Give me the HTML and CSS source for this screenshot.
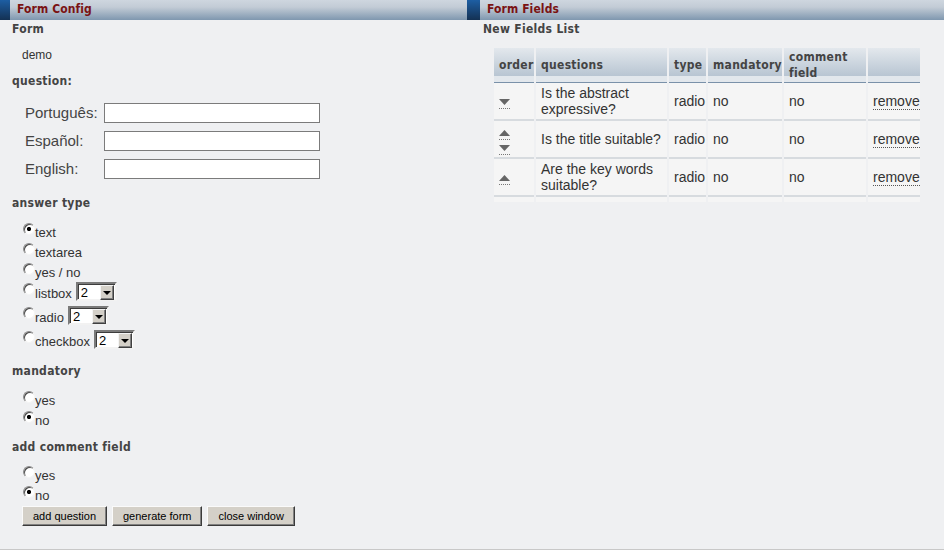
FILE: index.html
```html
<!DOCTYPE html>
<html>
<head>
<meta charset="utf-8">
<title>Form Config</title>
<link rel="stylesheet" href="styles.css">
</head>
<body>
<div class="page">
  <section class="panel panel-left">
    <div class="panel-head"><span class="head-mark"></span><h1 class="head-title">Form Config</h1></div>
    <div class="left-body">
      <div class="label-bold">Form</div>
      <div class="form-name">demo</div>
      <div class="label-bold q-label">question:</div>
      <div class="lang-grid">
        <label class="lang-label">Português:</label><input class="lang-input" type="text">
        <label class="lang-label">Español:</label><input class="lang-input" type="text">
        <label class="lang-label">English:</label><input class="lang-input" type="text">
      </div>

      <div class="label-bold sec-answer">answer type</div>
      <div class="radio-group group-answer">
        <div class="radio-row"><input class="radio" type="radio" name="at" checked><span class="radio-label">text</span></div>
        <div class="radio-row"><input class="radio" type="radio" name="at"><span class="radio-label">textarea</span></div>
        <div class="radio-row"><input class="radio" type="radio" name="at"><span class="radio-label">yes / no</span></div>
        <div class="radio-row tall"><input class="radio" type="radio" name="at"><span class="radio-label">listbox</span>
          <span class="select"><select class="select-native"><option>2</option></select><span class="select-btn"><span class="select-arrow"></span></span></span></div>
        <div class="radio-row tall"><input class="radio" type="radio" name="at"><span class="radio-label">radio</span>
          <span class="select"><select class="select-native"><option>2</option></select><span class="select-btn"><span class="select-arrow"></span></span></span></div>
        <div class="radio-row tall"><input class="radio" type="radio" name="at"><span class="radio-label">checkbox</span>
          <span class="select"><select class="select-native"><option>2</option></select><span class="select-btn"><span class="select-arrow"></span></span></span></div>
      </div>

      <div class="label-bold sec-mid">mandatory</div>
      <div class="radio-group group-mid">
        <div class="radio-row"><input class="radio" type="radio" name="md"><span class="radio-label">yes</span></div>
        <div class="radio-row"><input class="radio" type="radio" name="md" checked><span class="radio-label">no</span></div>
      </div>

      <div class="label-bold sec-mid">add comment field</div>
      <div class="radio-group group-comment">
        <div class="radio-row"><input class="radio" type="radio" name="cf"><span class="radio-label">yes</span></div>
        <div class="radio-row"><input class="radio" type="radio" name="cf" checked><span class="radio-label">no</span></div>
      </div>

      <div class="buttons">
        <button class="btn" type="button">add question</button>
        <button class="btn" type="button">generate form</button>
        <button class="btn" type="button">close window</button>
      </div>
    </div>
  </section>

  <section class="panel panel-right">
    <div class="panel-head"><span class="head-mark mark-wide"></span><h1 class="head-title">Form Fields</h1></div>
    <div class="right-body">
      <div class="label-bold">New Fields List</div>
      <div class="table-wrap">
        <table class="fields">
          <colgroup>
            <col class="c-order"><col class="c-q"><col class="c-type"><col class="c-mand"><col class="c-comm"><col class="c-act">
          </colgroup>
          <thead>
            <tr>
              <th>order</th>
              <th>questions</th>
              <th>type</th>
              <th>mandatory</th>
              <th class="wrap">comment field</th>
              <th></th>
            </tr>
          </thead>
          <tbody>
            <tr>
              <td class="order-cell"><span class="arrows"><a class="arrow" href="#"><svg width="11" height="6" viewBox="0 0 11 6"><path d="M0 0H11L5.5 6Z" fill="#666"/></svg></a></span></td>
              <td>Is the abstract expressive?</td>
              <td>radio</td>
              <td>no</td>
              <td>no</td>
              <td><a class="remove" href="#">remove</a></td>
            </tr>
            <tr>
              <td class="order-cell"><span class="arrows"><a class="arrow" href="#"><svg width="11" height="6" viewBox="0 0 11 6"><path d="M0 6H11L5.5 0Z" fill="#666"/></svg></a><a class="arrow" href="#"><svg width="11" height="6" viewBox="0 0 11 6"><path d="M0 0H11L5.5 6Z" fill="#666"/></svg></a></span></td>
              <td>Is the title suitable?</td>
              <td>radio</td>
              <td>no</td>
              <td>no</td>
              <td><a class="remove" href="#">remove</a></td>
            </tr>
            <tr>
              <td class="order-cell"><span class="arrows"><a class="arrow" href="#"><svg width="11" height="6" viewBox="0 0 11 6"><path d="M0 6H11L5.5 0Z" fill="#666"/></svg></a></span></td>
              <td>Are the key words suitable?</td>
              <td>radio</td>
              <td>no</td>
              <td>no</td>
              <td><a class="remove" href="#">remove</a></td>
            </tr>
            <tr class="stub"><td></td><td></td><td></td><td></td><td></td><td></td></tr>
          </tbody>
        </table>
      </div>
    </div>
  </section>
</div>
</body>
</html>
```

FILE: styles.css
```css
* { box-sizing: border-box; }
html, body { margin: 0; padding: 0; }
body {
  background: #eff0f2;
  font-family: "Liberation Sans", Arial, sans-serif;
  color: #333;
}
.page {
  display: flex;
  width: 944px;
  height: 550px;
  border-bottom: 1px solid #c8c8c8;
  overflow: hidden;
}
.panel-left { width: 467px; flex: none; }
.panel-right { width: 477px; flex: none; }

.panel-head {
  height: 20px;
  display: flex;
  background: linear-gradient(#ced6df 0%, #c3ccd6 35%, #7f97af 100%);
}
.head-mark {
  width: 10px;
  background: linear-gradient(#1d5ea3, #143153);
}
.mark-wide { width: 13px; }
.head-title {
  margin: 0 0 0 7px;
  font-family: "DejaVu Sans Condensed", "DejaVu Sans", sans-serif;
  font-stretch: condensed;
  font-weight: bold;
  font-size: 12px;
  line-height: 18px;
  letter-spacing: 0.1px;
  color: #7a1313;
}

.label-bold {
  font-family: "DejaVu Sans Condensed", "DejaVu Sans", sans-serif;
  font-stretch: condensed;
  font-weight: bold;
  font-size: 12px;
  line-height: 16px;
  height: 16px;
  padding-top: 1px;
  letter-spacing: 0.3px;
  color: #444;
}

.left-body { padding-left: 12px; }
.form-name {
  margin-top: 10px;
  padding-left: 10px;
  padding-top: 1px;
  height: 16px;
  font-size: 12px;
  line-height: 16px;
  color: #333;
}
.q-label { margin-top: 10px; }

.lang-grid {
  display: grid;
  grid-template-columns: 79px 216px;
  grid-auto-rows: 20px;
  row-gap: 8px;
  margin-top: 15px;
  padding-left: 13px;
}
.lang-label {
  font-size: 15px;
  line-height: 20px;
  color: #444;
}
.lang-input {
  height: 20px;
  margin: 0;
  border: 1px solid #7b7b7b;
  background: #fff;
  padding: 0 2px;
  font: 13px "Liberation Sans", Arial, sans-serif;
}

.sec-answer { margin-top: 15px; }
.sec-mid { margin-top: 7px; }
.group-answer, .group-mid { margin-top: 13px; }
.group-comment { margin-top: 12px; }

.radio-group { padding-left: 11px; }
.radio-row {
  height: 20px;
  display: flex;
  align-items: flex-start;
}
.radio-row.tall { height: 24px; }
.radio {
  appearance: none;
  -webkit-appearance: none;
  margin: 0;
  width: 12px;
  height: 12px;
  flex: none;
  border-radius: 50%;
  border: 1px solid;
  border-color: #8a8a8a #f4f4f4 #f4f4f4 #8a8a8a;
  background: #fff;
  box-shadow: inset 1px 1px 0 #4a4a4a;
}
.radio:checked {
  background: radial-gradient(circle at 50% 50%, #000 0, #000 1.8px, #fff 2.4px);
}
.radio-label {
  font-size: 13px;
  line-height: 16px;
  padding-top: 2px;
  color: #333;
}
.radio-row.tall .radio-label { padding-top: 3px; }

.select {
  display: flex;
  margin: -1px 0 0 4px;
  width: 41px;
  height: 19px;
  border: 2px solid;
  border-color: #7a7a7a #f2f2f2 #f2f2f2 #7a7a7a;
  box-shadow: inset 1px 1px 0 #3c3c3c;
  background: #fff;
  padding: 1px 1px 0 1px;
}
.select-native {
  appearance: none;
  -webkit-appearance: none;
  border: 0;
  margin: 0;
  background: transparent;
  width: 22px;
  height: 15px;
  padding: 0 0 0 2px;
  font: 13px/15px "Liberation Sans", Arial, sans-serif;
  color: #000;
  outline: none;
}
.select-btn {
  width: 14px;
  height: 15px;
  flex: none;
  display: flex;
  align-items: center;
  justify-content: center;
  background: #d4d0c8;
  border: 1px solid;
  border-color: #f4f4f4 #404040 #404040 #f4f4f4;
  box-shadow: inset -1px -1px 0 #808080;
}
.select-arrow {
  width: 0;
  height: 0;
  border-left: 4px solid transparent;
  border-right: 4px solid transparent;
  border-top: 4px solid #000;
  margin-top: 1px;
}

.buttons {
  display: flex;
  gap: 5px;
  padding-left: 10px;
}
.btn {
  height: 20px;
  margin: 0;
  padding: 0 10px;
  background: #d4d0c8;
  border: 1px solid;
  border-color: #fafafa #3a3a3a #3a3a3a #fafafa;
  box-shadow: inset -1px -1px 0 #808080;
  font: 11px/16px "Liberation Sans", Arial, sans-serif;
  color: #000;
}

.right-body { padding-left: 16px; }
.table-wrap {
  margin-top: 12px;
  margin-left: 9px;
  width: 428px;
  overflow: hidden;
}
.fields {
  table-layout: fixed;
  border-collapse: separate;
  border-spacing: 2px 0;
  width: 438px;
}
.c-order { width: 40px; }
.c-q { width: 131px; }
.c-type { width: 37px; }
.c-mand { width: 74px; }
.c-comm { width: 82px; }
.c-act { width: 60px; }

.fields th {
  padding: 0 5px;
  text-align: left;
  white-space: nowrap;
  vertical-align: middle;
  font-family: "DejaVu Sans Condensed", "DejaVu Sans", sans-serif;
  font-stretch: condensed;
  font-weight: bold;
  font-size: 12px;
  line-height: 16px;
  letter-spacing: 0.3px;
  color: #444;
  background: linear-gradient(to bottom, #e3e8ed 0, #b8c5d2 28px, #e2e7ec 28px);
  border-bottom: 1px solid #7a91a9;
}
.fields th.wrap { white-space: normal; }
.fields thead tr { height: 35px; }

.fields td {
  padding: 0 5px;
  vertical-align: middle;
  background: #f5f5f5;
  border-bottom: 2px solid #d7dbdf;
  font-size: 14px;
  line-height: 16px;
  color: #333;
  white-space: normal;
}
.fields tbody tr { height: 38px; }
.fields tbody tr.stub { height: 5px; }
.fields tr.stub td { border-bottom: 0; padding: 0; }

.fields td.order-cell { padding-left: 5px; }
.arrows {
  display: flex;
  flex-direction: column;
  gap: 5px;
  width: 11px;
  margin-top: 6px;
}
.arrow {
  display: block;
  height: 10px;
  border-bottom: 1px dotted #777;
  line-height: 0;
}
.arrow svg { display: block; }
.remove {
  color: #333;
  text-decoration: none;
  border-bottom: 1px dotted #555;
  white-space: nowrap;
}
```
